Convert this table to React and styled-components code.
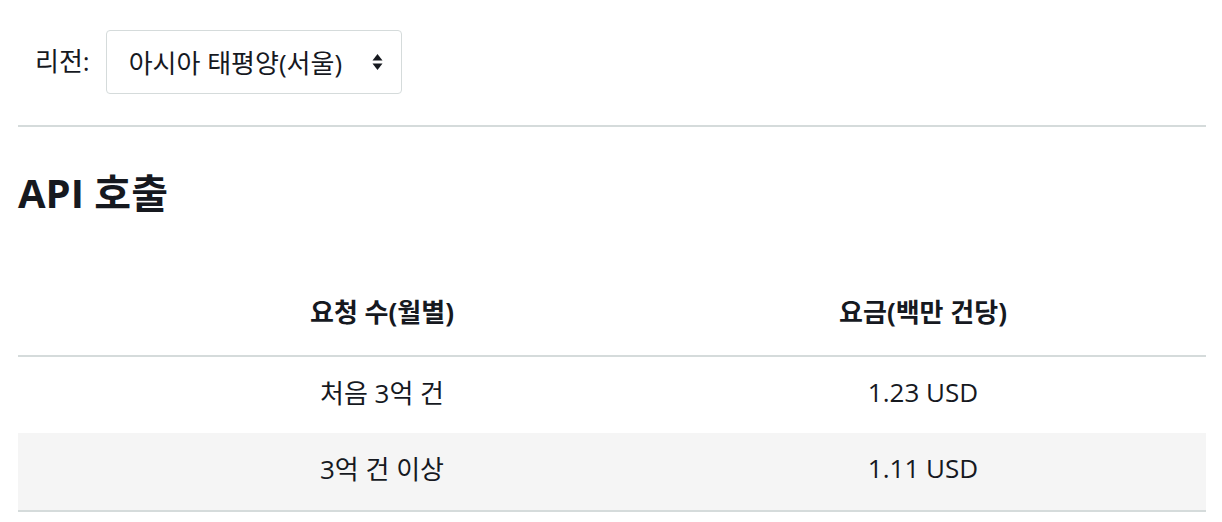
import React from "react";
import styled, { createGlobalStyle } from "styled-components";

const Global = createGlobalStyle`
  html, body { margin: 0; padding: 0; background: #fff; }
  body {
    font-family: "Open Sans", "Noto Sans CJK KR", sans-serif;
    color: #16191f;
  }
`;

const Page = styled.div`
  padding: 30px 16px 0 18px;
`;

const RegionRow = styled.div`
  display: flex;
  align-items: center;
  gap: 16px;
  padding-left: 17px;
`;

const Label = styled.span`
  font-size: 26px;
  position: relative;
  top: -2px;
`;

const Select = styled.div`
  box-sizing: border-box;
  width: 296px;
  height: 64px;
  border: 1px solid #d5dbdb;
  border-radius: 4px;
  display: flex;
  align-items: center;
  justify-content: space-between;
  padding: 0 18px 0 22px;
  font-size: 26px;
`;

const Arrow = styled.svg`
  width: 11px;
  height: 18px;
`;

const Rule = styled.hr`
  border: 0;
  height: 2px;
  background: #d5dbdb;
  margin: 31px 0 0;
`;

const Heading = styled.h2`
  margin: 40px 0 0;
  font-size: 40px;
  line-height: 52px;
  font-weight: 700;
`;

const Table = styled.div`
  margin-top: 50px;
`;

const Row = styled.div`
  display: grid;
  grid-template-columns: 728px 354px 1fr;
  align-items: center;
  height: ${(p) => p.$h}px;
  background: ${(p) => (p.$shade ? "#f5f5f5" : "transparent")};
  border-bottom: ${(p) => (p.$border ? "2px solid #d5dbdb" : "none")};
`;

const Cell = styled.div`
  text-align: center;
  font-size: 26px;
  font-weight: ${(p) => (p.$head ? 700 : 400)};
  padding-bottom: ${(p) => (p.$head ? 2 : 7)}px;
`;

export default function App() {
  return (
    <>
      <Global />
      <Page>
        <RegionRow>
          <Label>리전:</Label>
          <Select>
            <span>아시아 태평양(서울)</span>
            <Arrow viewBox="0 0 11 18">
              <path d="M0.5 7.5 L5.5 1 L10.5 7.5 Z" fill="#16191f" />
              <path d="M0.5 10.5 L5.5 17 L10.5 10.5 Z" fill="#16191f" />
            </Arrow>
          </Select>
        </RegionRow>
        <Rule />
        <Heading>API 호출</Heading>
        <Table>
          <Row $h={86} $border>
            <Cell $head>요청 수(월별)</Cell>
            <Cell $head>요금(백만 건당)</Cell>
            <div />
          </Row>
          <Row $h={76}>
            <Cell>처음 3억 건</Cell>
            <Cell>1.23 USD</Cell>
            <div />
          </Row>
          <Row $h={77} $shade $border>
            <Cell>3억 건 이상</Cell>
            <Cell>1.11 USD</Cell>
            <div />
          </Row>
        </Table>
      </Page>
    </>
  );
}
